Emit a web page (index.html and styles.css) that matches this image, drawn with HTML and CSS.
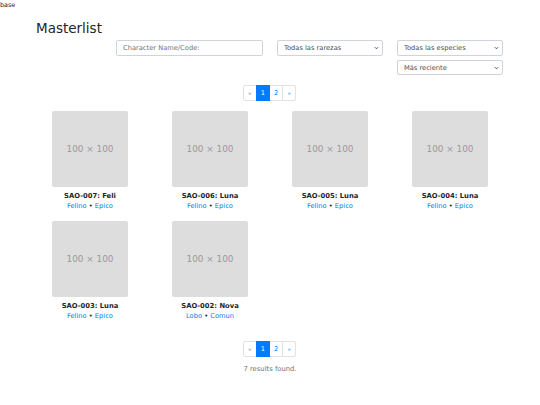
FILE: index.html
```html
<!DOCTYPE html>
<html lang="es">
<head>
    <meta charset="UTF-8">
    <meta name="viewport" content="width=device-width, initial-scale=1.0">
    <title>Masterlist</title>
    <link rel="stylesheet" href="styles.css">
</head>
<body>
    <div class="base">base</div>

    <div class="container">
        <h1 class="title">Masterlist</h1>

        <form class="filters">
            <div class="filter-row">
                <input class="field search" type="text" placeholder="Character Name/Code:">
                <select class="field select">
                    <option>Todas las rarezas</option>
                </select>
                <select class="field select">
                    <option>Todas las especies</option>
                </select>
            </div>
            <div class="filter-row">
                <select class="field select">
                    <option>Más reciente</option>
                </select>
            </div>
        </form>

        <ul class="pagination">
            <li class="page"><a href="#">&laquo;</a></li>
            <li class="page active"><a href="#">1</a></li>
            <li class="page"><a href="#">2</a></li>
            <li class="page"><a href="#">&raquo;</a></li>
        </ul>

        <div class="grid">
            <div class="card">
                <div class="thumb">100 × 100</div>
                <div class="name">SAO-007: Feli</div>
                <div class="tags"><a href="#">Felino</a> • <a href="#">Epico</a></div>
            </div>
            <div class="card">
                <div class="thumb">100 × 100</div>
                <div class="name">SAO-006: Luna</div>
                <div class="tags"><a href="#">Felino</a> • <a href="#">Epico</a></div>
            </div>
            <div class="card">
                <div class="thumb">100 × 100</div>
                <div class="name">SAO-005: Luna</div>
                <div class="tags"><a href="#">Felino</a> • <a href="#">Epico</a></div>
            </div>
            <div class="card">
                <div class="thumb">100 × 100</div>
                <div class="name">SAO-004: Luna</div>
                <div class="tags"><a href="#">Felino</a> • <a href="#">Epico</a></div>
            </div>
            <div class="card">
                <div class="thumb">100 × 100</div>
                <div class="name">SAO-003: Luna</div>
                <div class="tags"><a href="#">Felino</a> • <a href="#">Epico</a></div>
            </div>
            <div class="card">
                <div class="thumb">100 × 100</div>
                <div class="name">SAO-002: Nova</div>
                <div class="tags"><a href="#">Lobo</a> • <a href="#">Comun</a></div>
            </div>
        </div>

        <ul class="pagination bottom">
            <li class="page"><a href="#">&laquo;</a></li>
            <li class="page active"><a href="#">1</a></li>
            <li class="page"><a href="#">2</a></li>
            <li class="page"><a href="#">&raquo;</a></li>
        </ul>

        <p class="results">7 results found.</p>
    </div>
</body>
</html>
```

FILE: styles.css
```css
* { box-sizing: border-box; }

body {
    margin: 0;
    font-family: "DejaVu Sans", Verdana, sans-serif;
    font-size: 6.4px;
    color: #212529;
    background: #fff;
}

a {
    color: #007bff;
    text-decoration: none;
}

.base {
    padding: 1px 0 0 0;
    line-height: 8px;
}

.container {
    width: 480px;
    margin: 0 auto;
    padding: 0 6px;
}

.title {
    margin: 10px 0 0;
    font-size: 13.5px;
    font-weight: 400;
    line-height: 18px;
}

/* filtros */
.filters {
    margin-top: 3px;
}

.filter-row {
    display: flex;
    justify-content: flex-end;
    gap: 14px;
    margin-right: 1px;
}

.filter-row + .filter-row {
    margin-top: 4px;
}

.field {
    height: 16px;
    padding: 0 6px;
    font-family: inherit;
    font-size: 6.7px;
    color: #495057;
    background-color: #fff;
    border: 1px solid #ced4da;
    border-radius: 2px;
    outline: none;
}

.field::placeholder {
    color: #6c757d;
}

.search {
    width: 147px;
}

.select {
    width: 106px;
    appearance: none;
    -webkit-appearance: none;
    background-image: url("data:image/svg+xml,%3Csvg xmlns='http://www.w3.org/2000/svg' width='6' height='4' viewBox='0 0 6 4'%3E%3Cpath d='M1 1l2 2 2-2' fill='none' stroke='%23343a40' stroke-width='1'/%3E%3C/svg%3E");
    background-repeat: no-repeat;
    background-position: right 3px center;
    background-size: 5px 4px;
}

.filter-row + .filter-row .select {
    height: 15px;
}

/* paginação */
.pagination {
    display: flex;
    justify-content: center;
    list-style: none;
    margin: 10px 0 0;
    padding: 0;
}

.page a {
    display: block;
    height: 16px;
    min-width: 14px;
    padding: 0 4px;
    line-height: 14px;
    text-align: center;
    font-size: 6.6px;
    border: 1px solid #dee2e6;
    margin-left: -1px;
    background: #fff;
}

.page:first-child a {
    border-radius: 2px 0 0 2px;
    font-size: 5px;
    color: #6c757d;
}

.page:last-child a {
    border-radius: 0 2px 2px 0;
    font-size: 5px;
}

.page.active a {
    background: #007bff;
    border-color: #007bff;
    color: #fff;
    position: relative;
}

/* grade de personagens */
.grid {
    display: grid;
    grid-template-columns: repeat(4, 120px);
    margin: 10px -6px 0;
}

.card {
    display: flex;
    flex-direction: column;
    align-items: center;
    text-align: center;
    margin-bottom: 10px;
}

.thumb {
    width: 76px;
    height: 76px;
    display: flex;
    align-items: center;
    justify-content: center;
    background: #dddddd;
    color: #999999;
    font-size: 8.9px;
    border-radius: 2px;
}

.name {
    margin-top: 5px;
    font-size: 6.8px;
    font-weight: 700;
    line-height: 9px;
}

.tags {
    margin-top: 1px;
    font-size: 6.7px;
    line-height: 9px;
}

.pagination.bottom {
    margin-top: 10px;
}

.results {
    margin: 8px 0 0;
    text-align: center;
    font-size: 6.8px;
    color: #6c757d;
}
```
